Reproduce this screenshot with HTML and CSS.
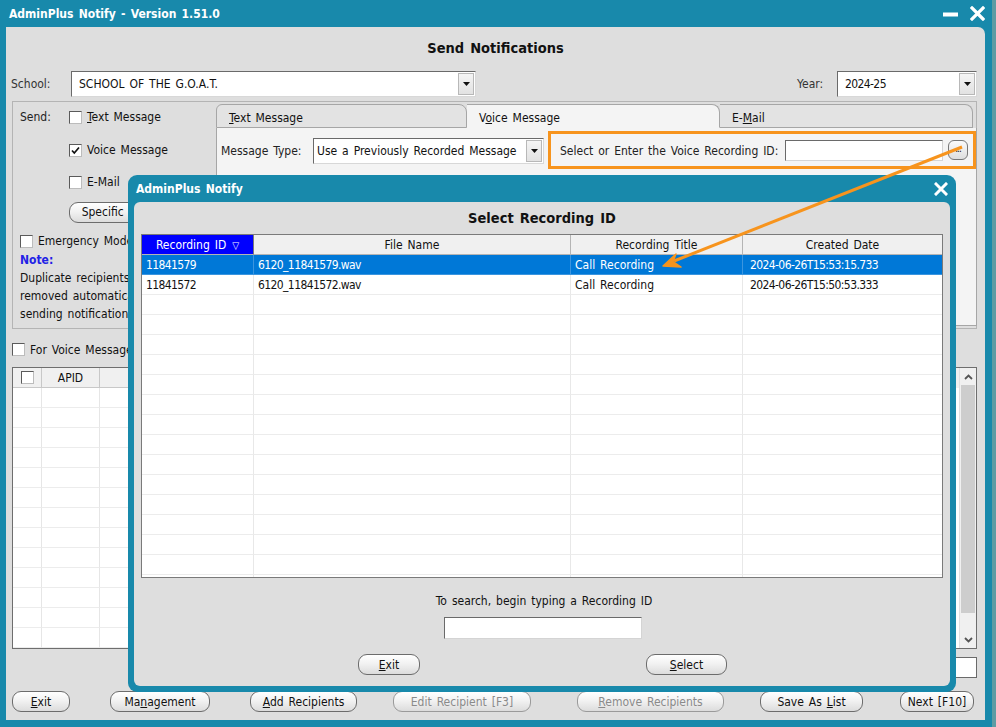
FILE: index.html
```html
<!DOCTYPE html>
<html>
<head>
<meta charset="utf-8">
<title>AdminPlus Notify</title>
<link rel="stylesheet" href="styles.css">
</head>
<body>
<div class="window">
  <div class="titlebar">
    <span class="title">AdminPlus Notify - Version 1.51.0</span>
    <div class="win-controls">
      <svg class="ic-min" width="16" height="5" viewBox="0 0 16 5"><rect x="0" y="0.5" width="15" height="4" fill="#fff"/></svg>
      <svg class="ic-close" width="15" height="15" viewBox="0 0 15 15"><path d="M2 2 L13 13 M13 2 L2 13" stroke="#fff" stroke-width="3.2" stroke-linecap="square"/></svg>
    </div>
  </div>
  <div class="client">
    <h1 class="heading">Send Notifications</h1>
    <div class="top-row">
      <span class="lbl school-lbl">School:</span>
      <div class="combo school-combo"><span class="combo-text">SCHOOL OF THE G.O.A.T.</span><span class="drop"><svg width="7" height="4" viewBox="0 0 7 4"><path d="M0 0 H7 L3.5 4 Z" fill="#111"/></svg></span></div>
      <span class="grow"></span>
      <span class="lbl year-lbl">Year:</span>
      <div class="combo year-combo"><span class="combo-text num">2024-25</span><span class="drop"><svg width="7" height="4" viewBox="0 0 7 4"><path d="M0 0 H7 L3.5 4 Z" fill="#111"/></svg></span></div>
    </div>

    <div class="send-group">
      <div class="send-left">
        <div class="srow r1"><span class="send-lbl">Send:</span><span class="cb"></span><span class="cb-text"><span class="u">T</span>ext Message</span></div>
        <div class="srow r2"><span class="send-lbl"></span><span class="cb"><svg width="11" height="11" viewBox="0 0 11 11"><path d="M2 5.5 L4.3 8 L9 2.5" fill="none" stroke="#111" stroke-width="1.7"/></svg></span><span class="cb-text">Voice Message</span></div>
        <div class="srow r3"><span class="send-lbl"></span><span class="cb"></span><span class="cb-text">E-Mail</span></div>
        <div class="srow r4"><span class="send-lbl"></span><span class="btn spec-btn"><span>Specif<span class="u">i</span>c Recipients</span></span></div>
        <div class="srow r5"><span class="cb"></span><span class="cb-text">Emergency Mode</span></div>
        <div class="note-line note">Note:</div>
        <div class="note-line">Duplicate recipients will be</div>
        <div class="note-line">removed automatically before</div>
        <div class="note-line">sending notifications.</div>
      </div>
      <div class="tabs">
        <div class="tab-strip">
          <div class="tab"><span class="u">T</span>ext Message</div>
          <div class="tab active">V<span class="u">o</span>ice Message</div>
          <div class="tab">E-<span class="u">M</span>ail</div>
        </div>
        <div class="tab-panel">
          <div class="msg-row">
            <span class="lbl msg-lbl">Message Type:</span>
            <div class="combo msg-combo"><span class="combo-text">Use a Previously Recorded Message</span><span class="drop"><svg width="7" height="4" viewBox="0 0 7 4"><path d="M0 0 H7 L3.5 4 Z" fill="#111"/></svg></span></div>
            <div class="highlight">
              <span class="lbl">Select or Enter the Voice Recording ID:</span>
              <span class="field rec-field"></span>
              <span class="dots-btn">...</span>
            </div>
          </div>
        </div>
      </div>
    </div>

    <div class="voice-row"><span class="cb"></span><span class="cb-text">For Voice Messages, call only the primary phone number</span></div>

    <div class="main-grid">
      <div class="mg-body">
        <div class="mg-head">
          <div class="mg-cell c0"><span class="cb"></span></div>
          <div class="mg-cell c1">APID</div>
          <div class="mg-cell c2">Student Name</div>
          <div class="mg-cell c3">Grade</div>
          <div class="mg-cell c4">Contact</div>
          <div class="mg-cell c5">Phone</div>
          <div class="mg-cell c6">E-Mail</div>
        </div>
        <div class="mg-row"><div class="mg-cell c0"></div><div class="mg-cell c1"></div><div class="mg-cell c2"></div><div class="mg-cell c3"></div><div class="mg-cell c4"></div><div class="mg-cell c5"></div><div class="mg-cell c6"></div></div>
        <div class="mg-row"><div class="mg-cell c0"></div><div class="mg-cell c1"></div><div class="mg-cell c2"></div><div class="mg-cell c3"></div><div class="mg-cell c4"></div><div class="mg-cell c5"></div><div class="mg-cell c6"></div></div>
        <div class="mg-row"><div class="mg-cell c0"></div><div class="mg-cell c1"></div><div class="mg-cell c2"></div><div class="mg-cell c3"></div><div class="mg-cell c4"></div><div class="mg-cell c5"></div><div class="mg-cell c6"></div></div>
        <div class="mg-row"><div class="mg-cell c0"></div><div class="mg-cell c1"></div><div class="mg-cell c2"></div><div class="mg-cell c3"></div><div class="mg-cell c4"></div><div class="mg-cell c5"></div><div class="mg-cell c6"></div></div>
        <div class="mg-row"><div class="mg-cell c0"></div><div class="mg-cell c1"></div><div class="mg-cell c2"></div><div class="mg-cell c3"></div><div class="mg-cell c4"></div><div class="mg-cell c5"></div><div class="mg-cell c6"></div></div>
        <div class="mg-row"><div class="mg-cell c0"></div><div class="mg-cell c1"></div><div class="mg-cell c2"></div><div class="mg-cell c3"></div><div class="mg-cell c4"></div><div class="mg-cell c5"></div><div class="mg-cell c6"></div></div>
        <div class="mg-row"><div class="mg-cell c0"></div><div class="mg-cell c1"></div><div class="mg-cell c2"></div><div class="mg-cell c3"></div><div class="mg-cell c4"></div><div class="mg-cell c5"></div><div class="mg-cell c6"></div></div>
        <div class="mg-row"><div class="mg-cell c0"></div><div class="mg-cell c1"></div><div class="mg-cell c2"></div><div class="mg-cell c3"></div><div class="mg-cell c4"></div><div class="mg-cell c5"></div><div class="mg-cell c6"></div></div>
        <div class="mg-row"><div class="mg-cell c0"></div><div class="mg-cell c1"></div><div class="mg-cell c2"></div><div class="mg-cell c3"></div><div class="mg-cell c4"></div><div class="mg-cell c5"></div><div class="mg-cell c6"></div></div>
        <div class="mg-row"><div class="mg-cell c0"></div><div class="mg-cell c1"></div><div class="mg-cell c2"></div><div class="mg-cell c3"></div><div class="mg-cell c4"></div><div class="mg-cell c5"></div><div class="mg-cell c6"></div></div>
        <div class="mg-row"><div class="mg-cell c0"></div><div class="mg-cell c1"></div><div class="mg-cell c2"></div><div class="mg-cell c3"></div><div class="mg-cell c4"></div><div class="mg-cell c5"></div><div class="mg-cell c6"></div></div>
        <div class="mg-row"><div class="mg-cell c0"></div><div class="mg-cell c1"></div><div class="mg-cell c2"></div><div class="mg-cell c3"></div><div class="mg-cell c4"></div><div class="mg-cell c5"></div><div class="mg-cell c6"></div></div>
        <div class="mg-row"><div class="mg-cell c0"></div><div class="mg-cell c1"></div><div class="mg-cell c2"></div><div class="mg-cell c3"></div><div class="mg-cell c4"></div><div class="mg-cell c5"></div><div class="mg-cell c6"></div></div>
      </div>
      <div class="vscroll">
        <span class="sb-arrow"><svg width="9" height="6" viewBox="0 0 9 6"><path d="M1 5 L4.5 1.5 L8 5" fill="none" stroke="#555" stroke-width="1.8"/></svg></span>
        <span class="sb-thumb"></span>
        <span class="sb-rest"></span>
        <span class="sb-arrow"><svg width="9" height="6" viewBox="0 0 9 6"><path d="M1 1 L4.5 4.5 L8 1" fill="none" stroke="#555" stroke-width="1.8"/></svg></span>
      </div>
    </div>

    <div class="count-row"><span class="field count-field"></span></div>

    <div class="btn-row">
      <span class="btn b-exit"><span><span class="u">E</span>xit</span></span>
      <span class="btn b-mgmt"><span>Ma<span class="u">n</span>agement</span></span>
      <span class="btn b-add"><span><span class="u">A</span>dd Recipients</span></span>
      <span class="btn b-edit disabled"><span>Edit Recipient [F3]</span></span>
      <span class="btn b-remove disabled"><span><span class="u">R</span>emove Recipients</span></span>
      <span class="btn b-save"><span>Save As <span class="u">L</span>ist</span></span>
      <span class="btn b-next"><span>Next [F10]</span></span>
    </div>
  </div>
</div>

<div class="dialog">
  <div class="dlg-title">
    <span>AdminPlus Notify</span>
    <svg width="14" height="14" viewBox="0 0 14 14"><path d="M2 2 L12 12 M12 2 L2 12" stroke="#fff" stroke-width="3" stroke-linecap="square"/></svg>
  </div>
  <div class="dlg-client">
    <div class="dlg-heading">Select Recording ID</div>
    <div class="rgrid">
      <div class="rg-row rg-head">
        <div class="rg-cell sorted">Recording ID <span class="sort">▽</span></div>
        <div class="rg-cell">File Name</div>
        <div class="rg-cell">Recording Title</div>
        <div class="rg-cell">Created Date</div>
      </div>
      <div class="rg-row selected">
        <div class="rg-cell num">11841579</div>
        <div class="rg-cell num">6120_11841579.wav</div>
        <div class="rg-cell">Call Recording</div>
        <div class="rg-cell date num">2024-06-26T15:53:15.733</div>
      </div>
      <div class="rg-row">
        <div class="rg-cell num">11841572</div>
        <div class="rg-cell num">6120_11841572.wav</div>
        <div class="rg-cell">Call Recording</div>
        <div class="rg-cell date num">2024-06-26T15:50:53.333</div>
      </div>
      <div class="rg-row"><div class="rg-cell"></div><div class="rg-cell"></div><div class="rg-cell"></div><div class="rg-cell"></div></div>
      <div class="rg-row"><div class="rg-cell"></div><div class="rg-cell"></div><div class="rg-cell"></div><div class="rg-cell"></div></div>
      <div class="rg-row"><div class="rg-cell"></div><div class="rg-cell"></div><div class="rg-cell"></div><div class="rg-cell"></div></div>
      <div class="rg-row"><div class="rg-cell"></div><div class="rg-cell"></div><div class="rg-cell"></div><div class="rg-cell"></div></div>
      <div class="rg-row"><div class="rg-cell"></div><div class="rg-cell"></div><div class="rg-cell"></div><div class="rg-cell"></div></div>
      <div class="rg-row"><div class="rg-cell"></div><div class="rg-cell"></div><div class="rg-cell"></div><div class="rg-cell"></div></div>
      <div class="rg-row"><div class="rg-cell"></div><div class="rg-cell"></div><div class="rg-cell"></div><div class="rg-cell"></div></div>
      <div class="rg-row"><div class="rg-cell"></div><div class="rg-cell"></div><div class="rg-cell"></div><div class="rg-cell"></div></div>
      <div class="rg-row"><div class="rg-cell"></div><div class="rg-cell"></div><div class="rg-cell"></div><div class="rg-cell"></div></div>
      <div class="rg-row"><div class="rg-cell"></div><div class="rg-cell"></div><div class="rg-cell"></div><div class="rg-cell"></div></div>
      <div class="rg-row"><div class="rg-cell"></div><div class="rg-cell"></div><div class="rg-cell"></div><div class="rg-cell"></div></div>
      <div class="rg-row"><div class="rg-cell"></div><div class="rg-cell"></div><div class="rg-cell"></div><div class="rg-cell"></div></div>
      <div class="rg-row"><div class="rg-cell"></div><div class="rg-cell"></div><div class="rg-cell"></div><div class="rg-cell"></div></div>
      <div class="rg-row"><div class="rg-cell"></div><div class="rg-cell"></div><div class="rg-cell"></div><div class="rg-cell"></div></div>
      <div class="rg-row"><div class="rg-cell"></div><div class="rg-cell"></div><div class="rg-cell"></div><div class="rg-cell"></div></div>
    </div>
    <div class="search-lbl">To search, begin typing a Recording ID</div>
    <div class="search-row"><span class="field search-field"></span></div>
    <div class="dlg-btns">
      <span class="btn d-exit"><span><span class="u">E</span>xit</span></span>
      <span class="btn d-select"><span><span class="u">S</span>elect</span></span>
    </div>
  </div>
</div>

<svg class="callout" width="996" height="727" viewBox="0 0 996 727">
  <line x1="962" y1="147" x2="674" y2="261" stroke="#f7941d" stroke-width="3"/>
  <path d="M663 266 L676 254 L673 261.5 L681 267 Z" fill="#f7941d" stroke="#f7941d" stroke-width="1.5" stroke-linejoin="round"/>
</svg>
</body>
</html>
```

FILE: styles.css
```css
* { box-sizing: border-box; }
html, body { margin: 0; padding: 0; }
body {
  width: 996px;
  height: 727px;
  overflow: hidden;
  position: relative;
  background: #1889ab;
  font-family: "DejaVu Sans Condensed", "DejaVu Sans", sans-serif;
  font-stretch: condensed;
  font-size: 12px;
  word-spacing: 1.5px;
  color: #111;
}
.u { text-decoration: underline; }
.num { letter-spacing: -0.6px; }

/* main window */
.window {
  width: 996px;
  height: 727px;
  background: #1889ab;
  border-right: 4px solid #5e9ca4;
  display: flex;
  flex-direction: column;
}
.titlebar {
  height: 27px;
  flex: none;
  display: flex;
  align-items: center;
  justify-content: space-between;
  padding: 0 7px 0 9px;
  color: #fff;
  font-weight: bold;
  font-size: 12px;
}
.win-controls { display: flex; align-items: center; gap: 11px; }
.ic-min { margin-top: 1px; }

.client {
  flex: 1;
  margin: 0 7px 7px 6px;
  background: #dedede;
  border-radius: 0 7px 0 0;
  display: flex;
  flex-direction: column;
  padding: 12px 8px 8px 6px;
}
.heading {
  margin: 0;
  height: 18px;
  line-height: 19px;
  font-size: 14.5px;
  font-weight: bold;
  text-align: center;
  padding-left: 2px;
}
.top-row {
  margin-top: 14px;
  height: 26px;
  display: flex;
  align-items: center;
}
.lbl { color: #222; white-space: nowrap; }
.school-lbl { width: 60px; margin-left: -1px; color: #333; }
.year-lbl { width: 40px; color: #333; }
.grow { flex: 1; }
.combo {
  height: 26px;
  background: #fff;
  border: 1px solid;
  border-color: #6a6a6a #d8d8d8 #d8d8d8 #6a6a6a;
  display: flex;
  align-items: center;
  justify-content: space-between;
  padding: 0 1px 0 7px;
  white-space: nowrap;
}
.school-combo { width: 405px; }
.year-combo { width: 140px; }
.drop {
  width: 16px;
  height: 22px;
  background: linear-gradient(#f4f4f4, #e2e2e2);
  border: 1px solid #b8b8b8;
  display: flex;
  align-items: center;
  justify-content: center;
}

/* send group */
.send-group {
  margin-top: 4px;
  height: 228px;
  border: 1px solid #b4b4b4;
  display: flex;
  padding: 2px 3px 2px 0;
}
.send-left {
  width: 203px;
  flex: none;
  padding: 3px 0 0 7px;
  display: flex;
  flex-direction: column;
}
.srow { height: 20px; display: flex; align-items: center; white-space: nowrap; }
.r2 { margin-top: 13px; }
.r3 { margin-top: 12px; }
.r4 { margin-top: 10px; }
.r5 { margin-top: 9px; }
.send-lbl { width: 49px; flex: none; color: #222; }
.cb {
  width: 13px;
  height: 13px;
  flex: none;
  background: #fff;
  border: 1px solid;
  border-color: #5a5a5a #bcbcbc #bcbcbc #5a5a5a;
  display: inline-flex;
  align-items: center;
  justify-content: center;
}
.cb-text { margin-left: 5px; white-space: nowrap; }
.spec-btn { width: 120px; height: 20px; justify-content: flex-start; padding-left: 8px; }
.note-line { height: 18px; line-height: 18px; white-space: nowrap; }
.note { color: #2222e6; font-weight: bold; }

.tabs { flex: 1; display: flex; flex-direction: column; }
.tab-strip { height: 24px; display: flex; flex: none; }
.tab {
  width: 251px;
  height: 24px;
  background: #e3e3e3;
  border: 1px solid #a6a6a6;
  border-left: none;
  border-radius: 0 8px 0 0;
  padding: 2px 0 0 12px;
  line-height: 22px;
  white-space: nowrap;
}
.tab:first-child { border-left: 1px solid #a6a6a6; border-radius: 6px 8px 0 0; }
.tab.active {
  width: 253px;
  background: #f4f4f4;
  border-bottom-color: #f4f4f4;
}
.tab:last-child { width: 253px; }
.tab-panel {
  flex: 1;
  background: #f4f4f4;
  border: 1px solid #a6a6a6;
  border-top: none;
}
.msg-row {
  margin-top: 3px;
  height: 38px;
  display: flex;
  align-items: center;
  padding-left: 4px;
}
.msg-lbl { width: 92px; padding-top: 2px; }
.msg-combo { width: 231px; height: 26px; padding-left: 3px; margin-top: 1px; }
.highlight {
  margin-left: 4px;
  width: 428px;
  height: 38px;
  flex: none;
  border: 3px solid #f7941d;
  display: flex;
  align-items: center;
  padding: 0 0 0 9px;
}
.highlight .lbl { padding-top: 1px; }
.field {
  display: block;
  background: #fff;
  border: 1px solid;
  border-color: #6a6a6a #d4d4d4 #d4d4d4 #6a6a6a;
}
.rec-field { width: 158px; height: 21px; margin-left: auto; }
.dots-btn {
  width: 20px;
  height: 20px;
  margin: 0 5px 0 5px;
  border: 1px solid #777;
  border-radius: 6px;
  background: linear-gradient(#fafafa, #dedede);
  font-size: 10px;
  line-height: 16px;
  text-align: center;
  letter-spacing: -1px;
  word-spacing: 0;
}

/* voice row */
.voice-row {
  margin-top: 14px;
  height: 13px;
  display: flex;
  align-items: center;
  white-space: nowrap;
}

/* main grid */
.main-grid {
  margin-top: 11px;
  height: 282px;
  border: 1px solid #6e6e6e;
  background: #fff;
  display: flex;
}
.mg-body { flex: 1; overflow: hidden; }
.mg-head, .mg-row { display: flex; height: 20px; }
.mg-head { background: #f0f0f0; }
.mg-cell {
  flex: none;
  height: 20px;
  border-right: 1px solid #e6e6e6;
  border-bottom: 1px solid #ececec;
  display: flex;
  align-items: center;
  justify-content: center;
  white-space: nowrap;
  overflow: hidden;
}
.mg-head .mg-cell { border-right-color: #c8c8c8; border-bottom-color: #c8c8c8; }
.c0 { width: 29px; }
.c1 { width: 58px; }
.c2 { width: 220px; }
.c3 { width: 80px; }
.c4 { width: 200px; }
.c5 { width: 150px; }
.c6 { width: 200px; }
.vscroll {
  width: 17px;
  flex: none;
  display: flex;
  flex-direction: column;
  background: #f0f0f0;
  border-left: 1px solid #e0e0e0;
}
.sb-arrow { height: 17px; display: flex; align-items: center; justify-content: center; flex: none; }
.sb-thumb { height: 228px; background: #cdcdcd; flex: none; margin: 0 1px; }
.sb-rest { flex: 1; }

.count-row { margin-top: 8px; height: 21px; display: flex; justify-content: flex-end; }
.count-field { width: 150px; height: 21px; border-color: #6a6a6a; }

/* buttons */
.btn {
  height: 21px;
  border: 1px solid #6c6c6c;
  border-radius: 9px;
  background: linear-gradient(#ffffff, #f2f2f2 45%, #dcdcdc);
  display: inline-flex;
  align-items: center;
  justify-content: center;
  white-space: nowrap;
  flex: none;
}
.btn.disabled { color: #8a8a8a; border-color: #9a9a9a; }
.btn-row { margin-top: 13px; height: 21px; display: flex; }
.b-exit { width: 58px; }
.b-mgmt { width: 100px; margin-left: 40px; }
.b-add { width: 107px; margin-left: 40px; }
.b-edit { width: 138px; margin-left: 36px; }
.b-remove { width: 147px; margin-left: 46px; }
.b-save { width: 103px; margin-left: 36px; }
.b-next { width: 74px; margin-left: 37px; }

/* dialog */
.dialog {
  position: absolute;
  left: 128px;
  top: 175px;
  width: 828px;
  height: 517px;
  background: #1889ab;
  border-radius: 9px;
  display: flex;
  flex-direction: column;
}
.dlg-title {
  height: 27px;
  flex: none;
  display: flex;
  align-items: center;
  justify-content: space-between;
  padding: 0 8px 0 8px;
  color: #fff;
  font-weight: bold;
  font-size: 12px;
}
.dlg-client {
  flex: 1;
  margin: 0 6px 6px 6px;
  background: #dedede;
  border-radius: 6px;
  display: flex;
  flex-direction: column;
}
.dlg-heading {
  margin-top: 6px;
  height: 18px;
  line-height: 20px;
  font-size: 14.5px;
  font-weight: bold;
  text-align: center;
}
.rgrid {
  margin: 8px 0 0 7px;
  width: 802px;
  height: 344px;
  border: 1px solid #7a7a7a;
  background: #fff;
  overflow: hidden;
}
.rg-row {
  display: grid;
  grid-template-columns: 112px 317px 172px 199px;
  height: 20px;
}
.rg-cell {
  height: 20px;
  border-right: 1px solid #e8e8e8;
  border-bottom: 1px solid #ececec;
  padding-left: 4px;
  line-height: 21px;
  white-space: nowrap;
  overflow: hidden;
}
.rg-cell:last-child { border-right: none; }
.rg-head { background: #f0f0f0; }
.rg-head .rg-cell {
  text-align: center;
  padding-left: 0;
  border-right-color: #b4b4b4;
  border-bottom-color: #b4b4b4;
}
.rg-head .rg-cell.sorted { background: #0000ff; color: #fff; border-right-color: #7a7a7a; }
.sort { font-size: 10px; margin-left: 1px; }
.selected { background: #0078d7; color: #fff; }
.selected .rg-cell { border-color: #3b95df; }
.rg-cell.date { padding-left: 7px; }

.search-lbl {
  margin-top: 15px;
  height: 16px;
  line-height: 16px;
  text-align: center;
  padding-left: 4px;
}
.search-row { margin-top: 8px; display: flex; justify-content: center; padding-left: 2px; }
.search-field { width: 198px; height: 22px; }
.dlg-btns { margin-top: 15px; display: flex; padding-left: 224px; }
.d-exit { width: 62px; }
.d-select { width: 81px; margin-left: 226px; }

.callout {
  position: absolute;
  left: 0;
  top: 0;
  pointer-events: none;
}
```
